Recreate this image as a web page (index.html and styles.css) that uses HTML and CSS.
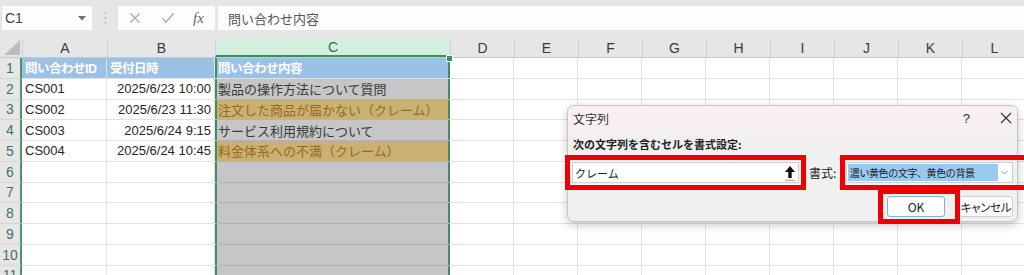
FILE: index.html
```html
<!DOCTYPE html>
<html lang="ja">
<head>
<meta charset="UTF-8">
<title>条件付き書式 - 文字列</title>
<link rel="stylesheet" href="styles.css">
</head>
<body>
<div class="formula-bar">
	<div class="name-box">
		<span>C1</span>
		<svg class="caret" width="8" height="5" viewBox="0 0 8 5"><polygon points="0,0 8,0 4,4.5" fill="#707070"/></svg>
	</div>
	<div class="grip">
		<svg width="3" height="14" viewBox="0 0 3 14"><circle cx="1.5" cy="2" r="1" fill="#b8b8b8"/><circle cx="1.5" cy="7" r="1" fill="#b8b8b8"/><circle cx="1.5" cy="12" r="1" fill="#b8b8b8"/></svg>
	</div>
	<div class="fx-box">
		<svg width="12" height="12" viewBox="0 0 12 12"><path d="M1.5 1.5 L10.5 10.5 M10.5 1.5 L1.5 10.5" stroke="#a8a8a8" stroke-width="1.2" fill="none"/></svg>
		<svg width="14" height="12" viewBox="0 0 14 12"><path d="M1.5 6.5 L5 10 L12.5 1.5" stroke="#a8a8a8" stroke-width="1.3" fill="none"/></svg>
		<span class="fx">fx</span>
	</div>
	<div class="formula-input">問い合わせ内容</div>
</div>

<div class="sheet">
	<div class="head-row">
		<div class="corner"><svg width="16" height="15" viewBox="0 0 16 15"><polygon points="0,15 16,15 16,0" fill="#bcbcbc"/></svg></div>
		<div class="col-head">A</div>
		<div class="col-head">B</div>
		<div class="col-head col-sel">C</div>
		<div class="col-head">D</div>
		<div class="col-head">E</div>
		<div class="col-head">F</div>
		<div class="col-head">G</div>
		<div class="col-head">H</div>
		<div class="col-head">I</div>
		<div class="col-head">J</div>
		<div class="col-head">K</div>
		<div class="col-head">L</div>
	</div>

	<div class="row">
		<div class="row-head">1</div>
		<div class="cell title">問い合わせID</div>
		<div class="cell title">受付日時</div>
		<div class="cell sel title first">問い合わせ内容</div>
		<div class="rest"></div>
	</div>
	<div class="row">
		<div class="row-head">2</div>
		<div class="cell">CS001</div>
		<div class="cell num">2025/6/23 10:00</div>
		<div class="cell sel">製品の操作方法について質問</div>
		<div class="rest"></div>
	</div>
	<div class="row">
		<div class="row-head">3</div>
		<div class="cell">CS002</div>
		<div class="cell num">2025/6/23 11:30</div>
		<div class="cell sel hit">注文した商品が届かない（クレーム）</div>
		<div class="rest"></div>
	</div>
	<div class="row">
		<div class="row-head">4</div>
		<div class="cell">CS003</div>
		<div class="cell num">2025/6/24 9:15</div>
		<div class="cell sel">サービス利用規約について</div>
		<div class="rest"></div>
	</div>
	<div class="row">
		<div class="row-head">5</div>
		<div class="cell">CS004</div>
		<div class="cell num">2025/6/24 10:45</div>
		<div class="cell sel hit">料金体系への不満（クレーム）</div>
		<div class="rest"></div>
	</div>
	<div class="row">
		<div class="row-head">6</div>
		<div class="cell"></div><div class="cell"></div><div class="cell sel"></div><div class="rest"></div>
	</div>
	<div class="row">
		<div class="row-head">7</div>
		<div class="cell"></div><div class="cell"></div><div class="cell sel"></div><div class="rest"></div>
	</div>
	<div class="row">
		<div class="row-head">8</div>
		<div class="cell"></div><div class="cell"></div><div class="cell sel"></div><div class="rest"></div>
	</div>
	<div class="row">
		<div class="row-head">9</div>
		<div class="cell"></div><div class="cell"></div><div class="cell sel"></div><div class="rest"></div>
	</div>
	<div class="row">
		<div class="row-head">10</div>
		<div class="cell"></div><div class="cell"></div><div class="cell sel"></div><div class="rest"></div>
	</div>
	<div class="row">
		<div class="row-head">11</div>
		<div class="cell"></div><div class="cell"></div><div class="cell sel"></div><div class="rest"></div>
	</div>
</div>

<div class="dialog">
	<div class="dlg-title">
		<span>文字列</span>
		<div class="dlg-controls">
			<span class="help">?</span>
			<svg width="12" height="12" viewBox="0 0 12 12"><path d="M1 1 L11 11 M11 1 L1 11" stroke="#333" stroke-width="1.1" fill="none"/></svg>
		</div>
	</div>
	<div class="dlg-body">
		<div class="dlg-label">次の文字列を含むセルを書式設定:</div>
		<div class="dlg-inputs">
			<div class="text-input">
				<span>クレーム</span>
				<svg width="12" height="16" viewBox="0 0 12 16"><path d="M6 1 L1 7 H4.3 V13 H7.7 V7 H11 Z" fill="#111"/><path d="M1 15.3 H11" stroke="#999" stroke-width="1"/></svg>
			</div>
			<span class="fmt-label">書式:</span>
			<div class="select">
				<span class="select-value">濃い黄色の文字、黄色の背景</span>
				<svg width="13" height="13" viewBox="0 0 13 13"><path d="M3.5 5 L6.5 8 L9.5 5" stroke="#999" stroke-width="1" fill="none"/></svg>
			</div>
		</div>
		<div class="dlg-buttons">
			<button class="btn btn-ok">OK</button>
			<button class="btn btn-cancel">キャンセル</button>
		</div>
	</div>
	<div class="mark mark-input"></div>
	<div class="mark mark-format"></div>
	<div class="mark mark-ok"></div>
</div>
</body>
</html>
```

FILE: styles.css
```css
* {
	box-sizing: border-box;
}
body {
	margin: 0;
	width: 1024px;
	height: 275px;
	overflow: hidden;
	position: relative;
	background-color: #E6E6E6;
	font-family: "Liberation Sans", "Noto Sans CJK JP", sans-serif;
	color: #333;
}

/* formula bar */
.formula-bar {
	display: flex;
	align-items: center;
	height: 38px;
	padding: 6px 0 8px 2px;
}
.name-box {
	width: 90px;
	height: 24px;
	background-color: #FDFDFD;
	display: flex;
	align-items: center;
	justify-content: space-between;
	padding: 0 6px 0 3px;
	font-size: 14px;
	color: #444;
}
.grip {
	width: 26px;
	display: flex;
	justify-content: center;
}
.fx-box {
	width: 97px;
	height: 24px;
	background-color: #FDFDFD;
	display: flex;
	align-items: center;
	padding-left: 11px;
	gap: 20px;
}
.fx {
	font-family: "Liberation Serif", serif;
	font-style: italic;
	font-size: 15px;
	color: #666;
	margin-left: -2px;
}
.formula-input {
	flex: 1;
	height: 24px;
	margin-left: 3px;
	background-color: #FDFDFD;
	display: flex;
	align-items: center;
	padding-left: 10px;
	font-family: "Noto Sans CJK JP", sans-serif;
	font-size: 13px;
	color: #555;
}

/* sheet */
.head-row {
	display: grid;
	grid-template-columns: 22px 85px 108px 235px repeat(9, 64px);
	height: 20px;
	background-color: #E6E6E6;
	border-bottom: 1px solid #C8C8C8;
}
.corner {
	display: flex;
	align-items: flex-end;
	justify-content: flex-end;
	padding: 0 2px 2px 0;
}
.col-head {
	display: flex;
	align-items: center;
	justify-content: center;
	font-size: 14px;
	color: #3a3a3a;
	border-left: 1px solid #D2D2D2;
}
.col-sel {
	background-color: #D3F0DF;
	color: #217346;
	border-bottom: 2px solid #3F8E5F;
}
.row {
	display: grid;
	grid-template-columns: 22px 85px 108px 235px 576px;
	height: 20.75px;
	font-size: 13px;
}
.row-head {
	background-color: #E6E6E6;
	border-right: 2px solid #4B9468;
	border-bottom: 1px solid #D6D6D6;
	display: flex;
	align-items: center;
	justify-content: center;
	font-size: 14px;
	color: #3E7659;
}
.cell {
	background-color: #FFF;
	border-right: 1px solid #E1E1E1;
	border-bottom: 1px solid #E1E1E1;
	display: flex;
	align-items: center;
	padding: 0 3px;
	white-space: nowrap;
	overflow: hidden;
	color: #262626;
}
.cell.num {
	justify-content: flex-end;
}
.cell.title {
	background-color: #9BC2E6;
	color: #FFF;
	font-weight: bold;
	font-size: 12.5px;
	letter-spacing: -0.5px;
}
.cell.sel {
	position: relative;
	overflow: visible;
	background-color: #C6C6C6;
	border-bottom-color: #B3B3B3;
	border-right: none;
	box-shadow: inset 2px 0 0 #3F8E5F, inset -2px 0 0 #3F8E5F;
	color: #3A3A3A;
	font-family: "Noto Sans CJK JP", sans-serif;
}
.cell.sel.title {
	background-color: #9BC2E6;
	color: #FFF;
	border-bottom-color: #E1E1E1;
}
.cell.sel.first::after {
	content: "";
	position: absolute;
	right: -3px;
	top: -3px;
	width: 5px;
	height: 5px;
	background-color: #3F8E5F;
	border: 1px solid #FFF;
}
.cell.hit {
	background-color: #C9B173;
	color: #9A6818;
}
.rest {
	background-color: #FFF;
	background-image: repeating-linear-gradient(to right, transparent 0 63px, #E1E1E1 63px 64px);
	border-bottom: 1px solid #E1E1E1;
}

/* dialog */
.dialog {
	position: absolute;
	left: 567px;
	top: 105px;
	width: 451px;
	height: 117px;
	background-color: #F0F0F0;
	border: 1px solid #C4C4C4;
	border-radius: 7px;
	box-shadow: 0 3px 10px rgba(0, 0, 0, 0.22);
	font-family: "Noto Sans CJK JP", sans-serif;
	font-size: 12px;
	color: #222;
}
.dlg-title {
	height: 24px;
	background-color: #F8F0F0;
	border-radius: 6px 6px 0 0;
	display: flex;
	align-items: center;
	justify-content: space-between;
	padding: 0 5px 0 5px;
	color: #333;
}
.dlg-controls {
	display: flex;
	align-items: center;
	gap: 30px;
}
.help {
	font-family: "Liberation Sans", sans-serif;
	font-size: 13px;
}
.dlg-body {
	padding: 6px 4px 0 4px;
}
.dlg-label {
	height: 16px;
	line-height: 16px;
	margin-left: 1px;
	font-weight: bold;
	font-size: 11px;
}
.dlg-inputs {
	display: flex;
	align-items: center;
	height: 21px;
	margin-top: 10px;
}
.text-input {
	width: 228px;
	height: 21px;
	background-color: #FFF;
	border: 1px solid #CFCFCF;
	display: flex;
	align-items: center;
	justify-content: space-between;
	padding: 0 2px 0 2px;
	font-size: 11px;
}
.fmt-label {
	margin-left: 10px;
	width: 37px;
}
.select {
	width: 168px;
	height: 21px;
	background-color: #FFF;
	border: 1px solid #CFCFCF;
	display: flex;
	align-items: center;
	padding: 1px 1px 1px 1px;
}
.select-value {
	flex: 1;
	height: 100%;
	background-color: #99C9EF;
	font-size: 10px;
	letter-spacing: -0.4px;
	display: flex;
	align-items: center;
	padding-left: 2px;
	white-space: nowrap;
	overflow: hidden;
}
.dlg-buttons {
	display: flex;
	justify-content: flex-end;
	gap: 14px;
	margin-top: 13px;
	padding-right: 0;
}
.btn {
	height: 21px;
	background-color: #FDFDFD;
	border: 1px solid #CFCFCF;
	border-radius: 3px;
	font-family: "Noto Sans CJK JP", sans-serif;
	font-size: 11px;
	color: #222;
	padding: 0;
}
.btn-ok {
	width: 58px;
	border-color: #7FB0E2;
	font-size: 12px;
}
.btn-cancel {
	width: 54px;
	font-size: 11.5px;
	font-feature-settings: "palt";
	letter-spacing: -0.3px;
	white-space: nowrap;
}

/* red annotation boxes */
.mark {
	position: absolute;
	border: 5px solid #EE0000;
}
.mark-input {
	left: -3px;
	top: 49px;
	width: 241px;
	height: 35px;
}
.mark-format {
	left: 272px;
	top: 49px;
	width: 190px;
	height: 35px;
}
.mark-ok {
	left: 310px;
	top: 83px;
	width: 82px;
	height: 35px;
}
```
